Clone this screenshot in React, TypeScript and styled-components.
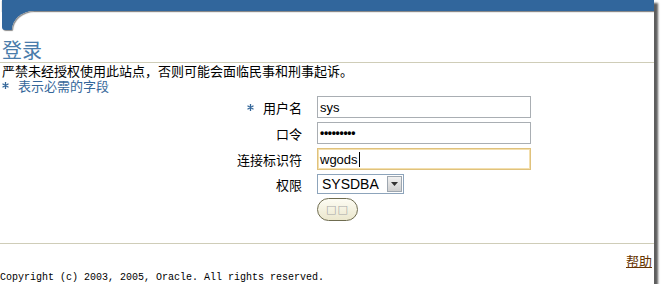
import React from "react";
import styled, { createGlobalStyle } from "styled-components";

const GlobalStyle = createGlobalStyle`
  html, body {
    margin: 0;
    padding: 0;
    background: #ffffff;
  }
  body {
    font-family: "Noto Sans CJK SC", "Liberation Sans", sans-serif;
    color: #000;
  }
`;

const Frame = styled.div`
  width: 654px;
  height: 284px;
  background: #fff;
  box-shadow: 4px 3px 2px rgba(40, 40, 40, 0.75);
  display: flex;
  flex-direction: column;
  overflow: hidden;
`;

const Header = styled.div`
  display: grid;
  grid-template-columns: 10px 22px 1fr;
  grid-template-rows: 11px 19px;
  flex: none;
  padding-left: 2px;
`;

const Bar = styled.div`
  grid-column: 1 / 4;
  background: #31669c;
  box-shadow: 0 1px 1px #8a8a8a;
`;

const Stem = styled.div`
  background: #31669c;
  border-bottom-left-radius: 3px;
  border-bottom-right-radius: 1px;
  box-shadow: 1px 1px 1px #8a8a8a;
`;

const Fillet = styled.div`
  background: #31669c;
  overflow: hidden;
`;

const FilletCut = styled.div`
  width: 100%;
  height: 100%;
  background: #fff;
  border-top-left-radius: 22px 19px;
  box-shadow: inset 1px 1px 1px #8a8a8a;
`;

const Title = styled.h1`
  margin: 7px 0 0;
  padding: 0 0 0 2px;
  font-size: 20px;
  font-weight: normal;
  line-height: 25px;
  color: #4a7cab;
  border-bottom: 1px solid #cfcdb8;
`;

const Notice = styled.div`
  margin-top: 0;
  padding-left: 2px;
  font-size: 13px;
  line-height: 15px;
  height: 15px;
  white-space: nowrap;
`;

const Required = styled.div`
  padding-left: 2px;
  font-size: 13px;
  line-height: 15px;
  height: 15px;
  color: #35679a;
  display: flex;
  align-items: center;
  gap: 9px;
`;

const Star = () => (
  <svg width="7" height="7" viewBox="0 0 7 7">
    <path
      d="M3.5 0 L3.5 7 M0.5 1.8 L6.5 5.2 M0.5 5.2 L6.5 1.8"
      stroke="#35679a"
      strokeWidth="1.3"
    />
  </svg>
);

const Form = styled.div`
  margin-top: 3px;
  display: grid;
  grid-template-columns: 302px 214px;
  column-gap: 15px;
  row-gap: 4px;
  align-items: center;
`;

const Label = styled.div`
  justify-self: end;
  font-size: 13px;
  display: flex;
  align-items: center;
  gap: 9px;
`;

const Field = styled.div<{ $focus?: boolean }>`
  height: 22px;
  box-sizing: border-box;
  border: 1px solid ${(p) => (p.$focus ? "#e0c27c" : "#a9aeb3")};
  box-shadow: ${(p) => (p.$focus ? "inset 0 0 0 1px #f3dfae" : "none")};
  background: #fff;
  display: flex;
  align-items: center;
  padding-left: 2px;
  font-family: "Liberation Sans", Arial, sans-serif;
  font-size: 13px;
`;

const Dots = styled.span`
  font-size: 12px;
  letter-spacing: -0.3px;
  font-weight: bold;
`;

const Caret = styled.span`
  width: 1px;
  height: 15px;
  background: #000;
  margin-left: 1px;
`;

const Select = styled.div`
  width: 87px;
  height: 20px;
  box-sizing: border-box;
  border: 1px solid #8da4bb;
  display: flex;
  align-items: center;
  justify-content: space-between;
  padding-left: 4px;
  padding-right: 1px;
  font-family: "Liberation Sans", Arial, sans-serif;
  font-size: 14px;
  background: #fff;
`;

const DropBtn = styled.div`
  width: 15px;
  height: 16px;
  box-sizing: border-box;
  border: 1px solid #9ea7b0;
  background: linear-gradient(#f1f1f1, #cfcfcf);
  display: flex;
  align-items: center;
  justify-content: center;
`;

const Submit = styled.button`
  grid-column: 2;
  justify-self: start;
  width: 41px;
  height: 23px;
  border: 1px solid #6f6c50;
  border-radius: 12px;
  background: linear-gradient(#fdfcf3, #ebe7cd);
  color: #a8a8a8;
  font-family: "DejaVu Sans", sans-serif;
  font-size: 11px;
  letter-spacing: 1px;
  padding: 0;
`;

const Spacer = styled.div`
  flex: 1;
`;

const Footer = styled.div`
  border-top: 1px solid #cfcdb8;
  display: flex;
  flex-direction: column;
  padding-top: 9px;
`;

const Help = styled.a`
  align-self: flex-end;
  margin-right: 2px;
  font-size: 13px;
  line-height: 16px;
  color: #663300;
  text-decoration: underline;
`;

const Copyright = styled.div`
  margin-top: 2px;
  font-family: "Liberation Mono", monospace;
  font-size: 10px;
  line-height: 13px;
  white-space: pre;
`;

export default function App() {
  return (
    <>
      <GlobalStyle />
      <Frame>
        <Header>
          <Bar />
          <Stem />
          <Fillet>
            <FilletCut />
          </Fillet>
        </Header>
        <Title>登录</Title>
        <Notice>严禁未经授权使用此站点，否则可能会面临民事和刑事起诉。</Notice>
        <Required>
          <Star />
          <span>表示必需的字段</span>
        </Required>
        <Form>
          <Label>
            <Star />
            <span>用户名</span>
          </Label>
          <Field>sys</Field>
          <Label>口令</Label>
          <Field>
            <Dots>•••••••••</Dots>
          </Field>
          <Label>连接标识符</Label>
          <Field $focus>
            wgods
            <Caret />
          </Field>
          <Label>权限</Label>
          <Select>
            <span>SYSDBA</span>
            <DropBtn>
              <svg width="7" height="4" viewBox="0 0 7 4">
                <path d="M0 0 L7 0 L3.5 4 Z" fill="#333" />
              </svg>
            </DropBtn>
          </Select>
          <Submit>□□</Submit>
        </Form>
        <Spacer />
        <Footer>
          <Help href="#">帮助</Help>
          <Copyright>Copyright (c) 2003, 2005, Oracle. All rights reserved.</Copyright>
        </Footer>
      </Frame>
    </>
  );
}
